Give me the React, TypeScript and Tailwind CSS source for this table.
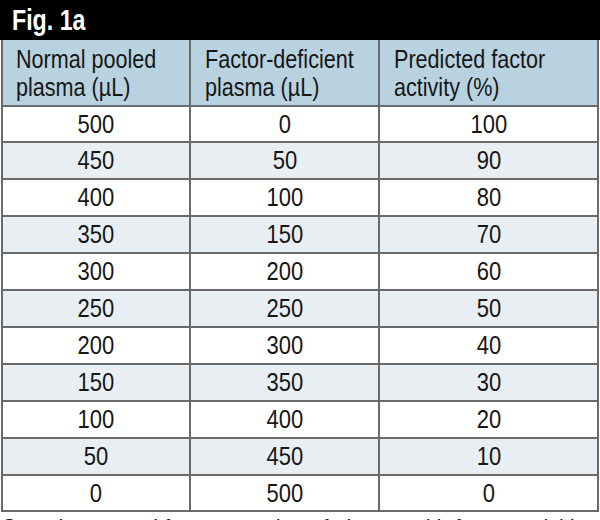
import React from "react";

const rows: [string, string, string][] = [
  ["500", "0", "100"],
  ["450", "50", "90"],
  ["400", "100", "80"],
  ["350", "150", "70"],
  ["300", "200", "60"],
  ["250", "250", "50"],
  ["200", "300", "40"],
  ["150", "350", "30"],
  ["100", "400", "20"],
  ["50", "450", "10"],
  ["0", "500", "0"],
];

const heights = ["h-[36px]", "h-[37px]", "h-[37px]", "h-[37px]", "h-[37px]", "h-[37px]", "h-[37px]", "h-[37px]", "h-[37px]", "h-[37px]", "h-[34px]"];

const font = { fontFamily: '"Liberation Sans", Arial, sans-serif' };

function Head({ a, b }: { a: string; b: string }) {
  return (
    <span className="inline-block origin-left scale-x-[0.83] whitespace-nowrap">
      {a}
      <br />
      {b}
    </span>
  );
}

export default function App() {
  return (
    <div className="w-[600px] h-[520px] bg-white overflow-hidden text-[#161616]" style={font}>
      <div className="h-[40px] bg-black flex items-center pl-[12px] pt-[1px]">
        <span className="inline-block origin-left scale-x-[0.8] text-white font-bold text-[29px] leading-none">
          Fig. 1a
        </span>
      </div>
      <div className="ml-[1px] w-[598px] border-l-2 border-r-2 border-b-2 border-[#6a6a6a]">
        <div className="flex h-[67px] bg-[#b9d2e0] border-b-2 border-[#6a6a6a] text-[26px] leading-[28px]">
          <div className="w-[188px] border-r-2 border-[#6a6a6a] pl-[13px] pt-[5px]">
            <Head a="Normal pooled" b="plasma (µL)" />
          </div>
          <div className="w-[189px] border-r-2 border-[#6a6a6a] pl-[14px] pt-[5px]">
            <Head a="Factor-deficient" b="plasma (µL)" />
          </div>
          <div className="flex-1 pl-[14px] pt-[5px]">
            <Head a="Predicted factor" b="activity (%)" />
          </div>
        </div>
        {rows.map((r, i) => (
          <div
            key={i}
            className={
              "flex text-[25px] leading-none " +
              heights[i] +
              (i % 2 === 1 ? " bg-[#e9eef3]" : " bg-white") +
              (i < rows.length - 1 ? " border-b-2 border-[#6a6a6a]" : "")
            }
          >
            {r.map((v, j) => (
              <div
                key={j}
                className={
                  "flex items-center justify-center " +
                  (j === 0 ? "w-[188px] border-r-2 border-[#6a6a6a]" : j === 1 ? "w-[189px] border-r-2 border-[#6a6a6a]" : "flex-1")
                }
              >
                <span className="inline-block scale-x-[0.88]">{v}</span>
              </div>
            ))}
          </div>
        ))}
      </div>
      <div className="pl-[2px] pt-[2px] text-[24px] leading-[28px] whitespace-nowrap">
        <span className="inline-block origin-left scale-x-[0.9]">
          Sample protocol for preparation of plasma with factor activities
        </span>
      </div>
    </div>
  );
}
